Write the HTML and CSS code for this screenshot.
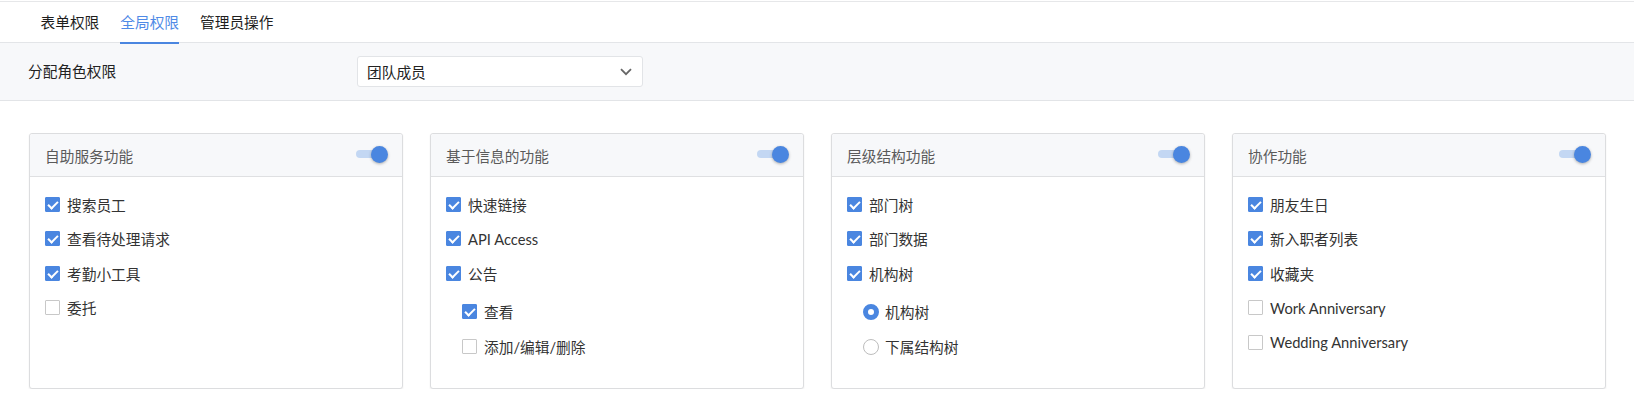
FILE: index.html
```html
<!DOCTYPE html>
<html lang="zh">
<head>
<meta charset="utf-8">
<title>全局权限</title>
<link rel="stylesheet" href="styles.css">
</head>
<body>
<div class="tabs">
  <div class="tab">表单权限</div>
  <div class="tab active">全局权限</div>
  <div class="tab">管理员操作</div>
</div>
<div class="role-row">
  <div class="role-label">分配角色权限</div>
  <div class="select">
    <span>团队成员</span>
    <svg class="chev" width="12" height="8" viewBox="0 0 12 8"><path d="M1 1.2 L6 6.2 L11 1.2" fill="none" stroke="#666" stroke-width="1.8"/></svg>
  </div>
</div>
<div class="cards">
  <div class="card">
    <div class="card-head"><span class="title">自助服务功能</span><span class="toggle"><span class="track"></span><span class="thumb"></span></span></div>
    <div class="card-body">
      <div class="item"><span class="cb on"></span>搜索员工</div>
      <div class="item"><span class="cb on"></span>查看待处理请求</div>
      <div class="item"><span class="cb on"></span>考勤小工具</div>
      <div class="item"><span class="cb"></span>委托</div>
    </div>
  </div>
  <div class="card">
    <div class="card-head"><span class="title">基于信息的功能</span><span class="toggle"><span class="track"></span><span class="thumb"></span></span></div>
    <div class="card-body">
      <div class="item"><span class="cb on"></span>快速链接</div>
      <div class="item"><span class="cb on"></span>API Access</div>
      <div class="item"><span class="cb on"></span>公告</div>
      <div class="sub">
        <div class="item"><span class="cb on"></span>查看</div>
        <div class="item"><span class="cb"></span>添加/编辑/删除</div>
      </div>
    </div>
  </div>
  <div class="card">
    <div class="card-head"><span class="title">层级结构功能</span><span class="toggle"><span class="track"></span><span class="thumb"></span></span></div>
    <div class="card-body">
      <div class="item"><span class="cb on"></span>部门树</div>
      <div class="item"><span class="cb on"></span>部门数据</div>
      <div class="item"><span class="cb on"></span>机构树</div>
      <div class="sub">
        <div class="item"><span class="radio on"></span>机构树</div>
        <div class="item"><span class="radio"></span>下属结构树</div>
      </div>
    </div>
  </div>
  <div class="card">
    <div class="card-head"><span class="title">协作功能</span><span class="toggle"><span class="track"></span><span class="thumb"></span></span></div>
    <div class="card-body">
      <div class="item"><span class="cb on"></span>朋友生日</div>
      <div class="item"><span class="cb on"></span>新入职者列表</div>
      <div class="item"><span class="cb on"></span>收藏夹</div>
      <div class="item"><span class="cb"></span>Work Anniversary</div>
      <div class="item"><span class="cb"></span>Wedding Anniversary</div>
    </div>
  </div>
</div>
</body>
</html>
```
FILE: styles.css
```css
* { box-sizing: border-box; }
body {
  margin: 0;
  background: #fff;
  font-family: Lato, "Noto Sans CJK SC", sans-serif;
  font-size: 14.7px;
  color: #333;
}
.tabs {
  margin-top: 1px;
  border-top: 1px solid #e6e7e9;
  border-bottom: 1px solid #e3e5e8;
  height: 42px;
  display: flex;
  padding-left: 30px;
}
.tab {
  margin: 0 10.5px;
  line-height: 40px;
  color: #1e1e1e;
  border-bottom: 2px solid transparent;
  height: 42px;
  margin-bottom: -1px;
}
.tab.active {
  color: #4f8ae6;
  border-bottom: 2px solid #4a86e0;
}
.role-row {
  background: #f7f8fa;
  border-bottom: 1px solid #e2e4e7;
  height: 58px;
  display: flex;
  align-items: center;
  padding-left: 28px;
}
.role-label {
  width: 329px;
  color: #222;
  margin-top: -3px;
}
.select {
  width: 286px;
  height: 31px;
  background: #fff;
  border: 1px solid #e2e4e7;
  border-radius: 3px;
  display: flex;
  align-items: center;
  justify-content: space-between;
  padding: 0 10px 0 9px;
  color: #222;
}
.cards {
  display: grid;
  grid-template-columns: repeat(4, 1fr);
  gap: 27px;
  padding: 32px 28px 0 29px;
}
.card {
  border: 1px solid #dcdddf;
  border-radius: 3px;
  box-shadow: 0 1px 2px rgba(0,0,0,0.07);
  background: #fff;
}
.card-head {
  height: 43px;
  background: #f7f8fa;
  border-bottom: 1px solid #dfe0e2;
  display: flex;
  align-items: center;
  justify-content: space-between;
  padding: 0 14px 0 15px;
  border-radius: 3px 3px 0 0;
}
.title {
  color: #5a5a5a;
  margin-top: 1px;
}
.toggle {
  position: relative;
  width: 32px;
  height: 17px;
  display: flex;
  align-items: center;
  margin-top: -2px;
}
.track {
  width: 27px;
  height: 8px;
  border-radius: 4px;
  background: #c3d7f3;
}
.thumb {
  position: absolute;
  right: 0;
  top: 0;
  width: 17px;
  height: 17px;
  border-radius: 50%;
  background: #4a86e0;
  box-shadow: 0 1px 3px rgba(0,0,0,0.3);
}
.card-body {
  padding: 17px 15px 31px 15px;
  display: flex;
  flex-direction: column;
  gap: 14.5px;
}
.sub {
  display: flex;
  flex-direction: column;
  gap: 15px;
  padding-left: 16px;
  margin-top: 4px;
}
.item {
  display: flex;
  align-items: center;
  height: 20px;
  color: #333;
}
.cb {
  width: 15px;
  height: 15px;
  margin-right: 7px;
  border: 1px solid #c8c8c8;
  border-radius: 1px;
  background: #fff;
  flex: none;
  position: relative;
}
.cb.on {
  background: #4a86e0;
  border-color: #4a86e0;
}
.cb.on::after {
  content: "";
  position: absolute;
  left: 4px;
  top: 1px;
  width: 4px;
  height: 8px;
  border: solid #fff;
  border-width: 0 2px 2px 0;
  transform: rotate(45deg);
}
.radio {
  width: 16px;
  height: 16px;
  border-radius: 50%;
  border: 1.5px solid #bdbdbd;
  margin-right: 6px;
  flex: none;
  background: #fff;
}
.radio.on {
  border: 5px solid #4a86e0;
}
```
